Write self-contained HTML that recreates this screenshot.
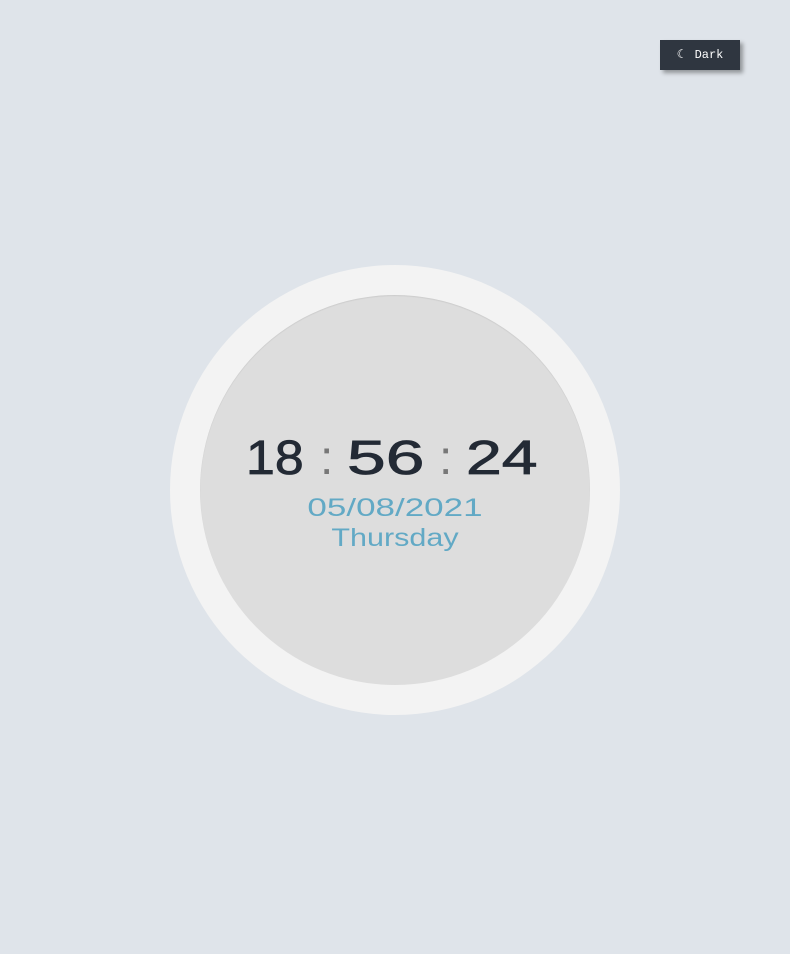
<!DOCTYPE html>
<html><head><meta charset="utf-8"><style>
html,body{margin:0;padding:0;}
body{width:790px;height:954px;background:#dfe4ea;position:relative;overflow:hidden;font-family:"Liberation Sans",sans-serif;}
.btn{position:absolute;left:660px;top:40px;width:80px;height:30px;background:#2f3640;box-shadow:3px 3px 4px rgba(0,0,0,0.35);color:#fff;font-family:"Liberation Mono",monospace;font-size:12px;line-height:31px;text-align:center;}
.outer{position:absolute;left:170px;top:265px;width:450px;height:450px;border-radius:50%;background:#f3f3f3;}
.inner{position:absolute;left:200px;top:295px;width:390px;height:390px;border-radius:50%;background:#dddddd;box-shadow:inset 0 1px 1px rgba(0,0,0,0.08);}
.g{position:absolute;top:429px;font-size:48px;line-height:60px;color:#232a35;transform-origin:0 0;white-space:nowrap;-webkit-text-stroke:0.8px #232a35;}
.c{color:#777;-webkit-text-stroke:0;}
.t{position:absolute;left:0;width:790px;text-align:center;white-space:nowrap;}
.date{top:494px;font-size:25px;line-height:28px;color:#62a9c5;transform:scaleX(1.4);}
.day{top:524px;font-size:25px;line-height:28px;color:#62a9c5;transform:scaleX(1.22);}
</style></head><body>
<div class="btn">☾ Dark</div>
<div class="outer"></div>
<div class="inner"></div>
<div class="g" style="left:246px;transform:scaleX(1.08)">18</div>
<div class="g c" style="left:320px">:</div>
<div class="g" style="left:347px;transform:scaleX(1.45)">56</div>
<div class="g c" style="left:439px">:</div>
<div class="g" style="left:466px;transform:scaleX(1.34)">24</div>
<div class="t date">05/08/2021</div>
<div class="t day">Thursday</div>
</body></html>
